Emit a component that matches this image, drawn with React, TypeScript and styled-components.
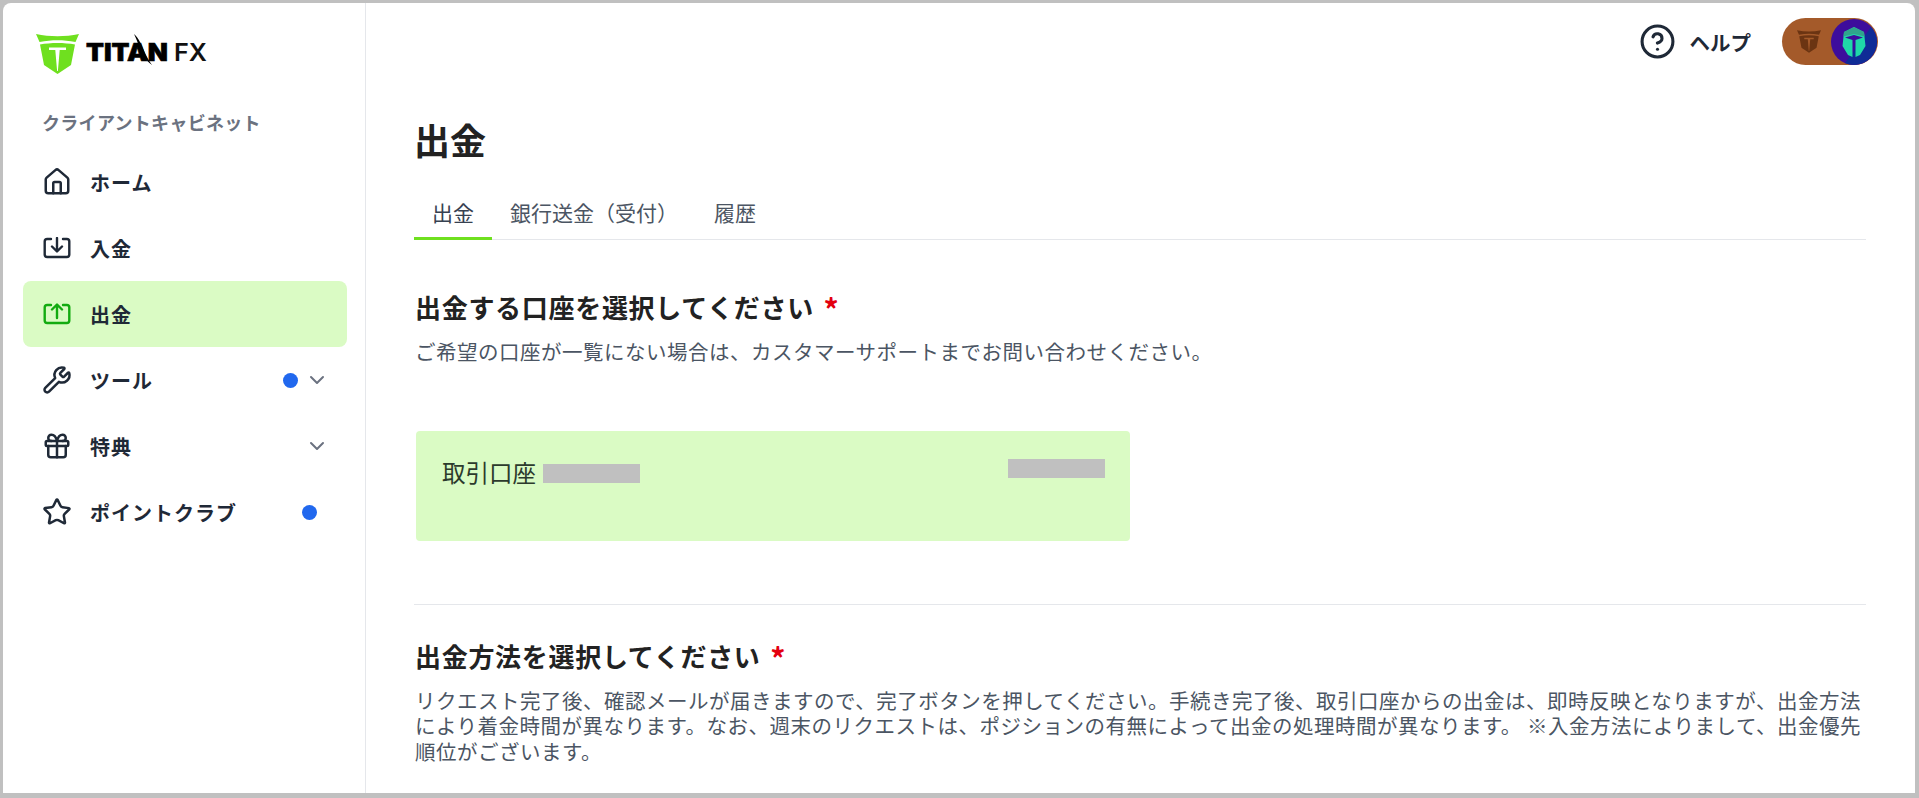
import React from 'react';
import styled, { createGlobalStyle } from 'styled-components';
import { ChevronDown, CircleHelp, Gift, House, Star, Wrench } from 'lucide-react';

const GlobalStyle = createGlobalStyle`
  html, body {
    margin: 0;
    height: 100%;
    overflow: hidden;
    background: #c0c0c0;
  }
  * { box-sizing: border-box; }
`;

const FONT = `"Noto Sans CJK JP", "Noto Sans", sans-serif`;

const TrayIcon = ({ up }: { up?: boolean }) => (
  <svg width="28" height="22" viewBox="0 0 28 22" fill="none" stroke="currentColor" strokeWidth="2.4" strokeLinecap="round" strokeLinejoin="round">
    <path d="M8 2H4.2A2.5 2.5 0 0 0 1.7 4.5v13A2.5 2.5 0 0 0 4.2 20h19.6a2.5 2.5 0 0 0 2.5-2.5v-13A2.5 2.5 0 0 0 23.8 2H20" />
    {up ? <path d="M14 15V2M9 6.500l5-5 5 5" /> : <path d="M14 1v13M9 9.500l5 5 5-5" />}
  </svg>
);

const ShieldMark = ({ color }: { color: string }) => (
  <svg width="100%" height="100%" viewBox="0 0 43 40" fill={color}>
    <path d="M0 0C14 3 29 3 43 0L39.500 8C27 5.500 16 5.500 3.500 8Z" />
    <path
      fillRule="evenodd"
      d="M4 10.500C15 8.500 28 8.500 39 10.500L35 31L21.500 40L8 31ZM13 13.500H30V16H23.700L21.900 37H21.100L19.300 16H13Z"
    />
  </svg>
);

const Helmet = () => (
  <svg width="46" height="46" viewBox="0 0 46 46">
    <circle cx="23" cy="23" r="23" fill="#3d0d9c" />
    <path d="M46 23A23 23 0 0 1 14 44L40 8A23 23 0 0 1 46 23Z" fill="#0f2c96" />
    <path d="M23 8L33 13L34.500 27L29 36L24.500 38V21L32 18.500L23 16L14 18.500L21.500 21V38L17 36L11.500 27L13 13Z" fill="#1fd8a8" />
    <path d="M23 8L33 13L33.500 17.500L23 15L12.500 17.500L13 13Z" fill="#2fa58c" />
  </svg>
);

function App() {
  return (
    <>
      <GlobalStyle />
      <Frame>
        <Sidebar>
          <LogoWrap>
            <LogoMark>
              <ShieldMark color="#6fe01f" />
            </LogoMark>
            <Wordmark width="122" height="42" viewBox="0 0 122 42">
              <WordTitan x="0" y="27" textLength="82" lengthAdjust="spacingAndGlyphs">TITAN</WordTitan>
              <path d="M48 0C53 4 56 12 59 19C61 23 63 27 66 31C60 27 56 20 53 13C52 9 50 4 48 0Z" fill="#000" />
              <WordFx x="88" y="27" textLength="33" lengthAdjust="spacingAndGlyphs">FX</WordFx>
            </Wordmark>
          </LogoWrap>
          <SideLabel>クライアントキャビネット</SideLabel>
          <Nav>
            <NavItem>
              <NavIcon><House size={30} strokeWidth={2} /></NavIcon>
              ホーム
            </NavItem>
            <NavItem>
              <NavIcon><TrayIcon /></NavIcon>
              入金
            </NavItem>
            <NavItem $active>
              <NavIcon $active><TrayIcon up /></NavIcon>
              出金
            </NavItem>
            <NavItem>
              <NavIcon><Wrench size={30} strokeWidth={2} /></NavIcon>
              ツール
              <Trailing>
                <Dot />
                <Chevron><ChevronDown size={24} strokeWidth={2} /></Chevron>
              </Trailing>
            </NavItem>
            <NavItem>
              <NavIcon><Gift size={30} strokeWidth={2} /></NavIcon>
              特典
              <Trailing>
                <Chevron><ChevronDown size={24} strokeWidth={2} /></Chevron>
              </Trailing>
            </NavItem>
            <NavItem>
              <NavIcon><Star size={30} strokeWidth={2} /></NavIcon>
              ポイントクラブ
              <Trailing>
                <Dot $solo />
              </Trailing>
            </NavItem>
          </Nav>
        </Sidebar>
        <Main>
          <TopBar>
            <HelpLink>
              <CircleHelp size={37} strokeWidth={2} />
              ヘルプ
            </HelpLink>
            <UserPill>
              <PillMark>
                <ShieldMark color="#6b3412" />
              </PillMark>
              <Helmet />
            </UserPill>
          </TopBar>
          <Content>
            <PageTitle>出金</PageTitle>
            <Tabs>
              <Tab $active>出金</Tab>
              <Tab>銀行送金（受付）</Tab>
              <Tab>履歴</Tab>
            </Tabs>
            <SectionTitle>出金する口座を選択してください <Required>*</Required></SectionTitle>
            <SectionText>ご希望の口座が一覧にない場合は、カスタマーサポートまでお問い合わせください。</SectionText>
            <AccountCard>
              <AccountName>
                取引口座
                <Redacted $inline />
              </AccountName>
              <Redacted />
            </AccountCard>
            <Divider />
            <SectionTitle $tight>出金方法を選択してください <Required>*</Required></SectionTitle>
            <SectionText>
              リクエスト完了後、確認メールが届きますので、完了ボタンを押してください。手続き完了後、取引口座からの出金は、即時反映となりますが、出金方法により着金時間が異なります。なお、週末のリクエストは、ポジションの有無によって出金の処理時間が異なります。 ※入金方法によりまして、出金優先順位がございます。
            </SectionText>
          </Content>
        </Main>
      </Frame>
    </>
  );
}

const Frame = styled.div`
  display: flex;
  height: 790px;
  margin: 3px 4px 0 3px;
  overflow: hidden;
  background: #fff;
  border-radius: 8px 8px 0 0;
  font-family: ${FONT};
  color: #1f2937;
`;

const Sidebar = styled.aside`
  flex: 0 0 363px;
  padding: 0 18px 0 20px;
  border-right: 1px solid #e5e7eb;
`;

const LogoWrap = styled.div`
  display: flex;
  align-items: center;
  gap: 7px;
  height: 72px;
  padding: 30px 0 0 13px;
`;

const LogoMark = styled.div`
  flex: none;
  width: 43px;
  height: 40px;
`;

const Wordmark = styled.svg`
  flex: none;
  margin-top: 2px;
  overflow: visible;
`;

const WordTitan = styled.text`
  font-family: "Inter", sans-serif;
  font-size: 24px;
  font-weight: 900;
  fill: #000;
  stroke: #000;
  stroke-width: 0.6px;
`;

const WordFx = styled.text`
  font-family: "Inter", sans-serif;
  font-size: 24px;
  font-weight: 600;
  fill: #111;
`;

const SideLabel = styled.div`
  margin-top: 34px;
  padding-left: 19px;
  font-size: 18px;
  line-height: 26px;
  font-weight: 700;
  letter-spacing: 0.3px;
  color: #6b7280;
`;

const Nav = styled.nav`
  display: flex;
  flex-direction: column;
  margin-top: 14px;
`;

const NavItem = styled.div<{ $active?: boolean }>`
  display: flex;
  align-items: center;
  height: 66px;
  padding: 0 18px 0 19px;
  border-radius: 8px;
  font-size: 20px;
  font-weight: 700;
  letter-spacing: 1px;
  color: #1f2937;
  background: ${(p) => (p.$active ? '#dafbc4' : 'transparent')};
`;

const NavIcon = styled.span<{ $active?: boolean }>`
  flex: none;
  display: flex;
  align-items: center;
  justify-content: center;
  width: 30px;
  height: 30px;
  margin-right: 18px;
  color: ${(p) => (p.$active ? '#12ab10' : '#1f2937')};
`;

const Trailing = styled.span`
  display: flex;
  align-items: center;
  gap: 7px;
  margin-left: auto;
`;

const Dot = styled.span<{ $solo?: boolean }>`
  width: 15px;
  height: 15px;
  margin-right: ${(p) => (p.$solo ? '12px' : '0')};
  border-radius: 50%;
  background: #2168ee;
`;

const Chevron = styled.span`
  display: flex;
  color: #6b7280;
`;

const Main = styled.main`
  flex: 1;
  min-width: 0;
  padding: 0 49px 0 48px;
`;

const TopBar = styled.header`
  display: flex;
  justify-content: flex-end;
  align-items: center;
  height: 77px;
  margin-right: -12px;
`;

const HelpLink = styled.div`
  display: flex;
  align-items: center;
  gap: 14px;
  margin-right: 31px;
  font-size: 20.500px;
  font-weight: 700;
  color: #1f2937;
`;

const UserPill = styled.div`
  display: flex;
  align-items: center;
  justify-content: space-between;
  width: 96px;
  height: 47px;
  padding: 0 1px 0 15px;
  border-radius: 24px;
  background: #a45a2a;
`;

const PillMark = styled.div`
  width: 24px;
  height: 23px;
`;

const Content = styled.div``;

const PageTitle = styled.h1`
  margin: 32px 0 0;
  font-size: 36px;
  line-height: 54px;
  font-weight: 700;
  color: #222;
`;

const Tabs = styled.div`
  display: flex;
  margin-top: 22px;
  border-bottom: 1px solid #e5e7eb;
`;

const Tab = styled.div<{ $active?: boolean }>`
  height: 52px;
  margin-bottom: -1px;
  padding: 0 18px;
  font-size: 21px;
  line-height: 49px;
  color: ${(p) => (p.$active ? '#374151' : '#4b5563')};
  border-bottom: 3px solid ${(p) => (p.$active ? '#6fe01f' : 'transparent')};
`;

const SectionTitle = styled.h2<{ $tight?: boolean }>`
  margin: ${(p) => (p.$tight ? '31px' : '47px')} 0 0 1px;
  font-size: 26px;
  line-height: 40px;
  font-weight: 700;
  letter-spacing: 0.7px;
  color: #222;
`;

const Required = styled.span`
  margin-left: 3px;
  font-size: 30px;
  line-height: 30px;
  vertical-align: -3px;
  color: #e3000f;
`;

const SectionText = styled.p`
  margin: 12px 0 0 1px;
  font-size: 20.500px;
  line-height: 25.500px;
  letter-spacing: 0.5px;
  color: #4b5563;
`;

const AccountCard = styled.div`
  display: flex;
  justify-content: space-between;
  align-items: flex-start;
  width: 714px;
  height: 110px;
  margin: 66px 0 0 2px;
  padding: 28px 25px 0 26px;
  border-radius: 4px;
  background: #dafbc4;
`;

const AccountName = styled.div`
  display: flex;
  align-items: flex-start;
  gap: 7px;
  font-size: 23.500px;
  line-height: 26px;
  color: #2c3a2c;
`;

const Redacted = styled.span<{ $inline?: boolean }>`
  display: block;
  width: 97px;
  height: 19px;
  margin-top: ${(p) => (p.$inline ? '5px' : '0')};
  background: #c0c0c0;
`;

const Divider = styled.hr`
  height: 1px;
  margin: 63px 0 0;
  border: 0;
  background: #e5e7eb;
`;

export default App;
